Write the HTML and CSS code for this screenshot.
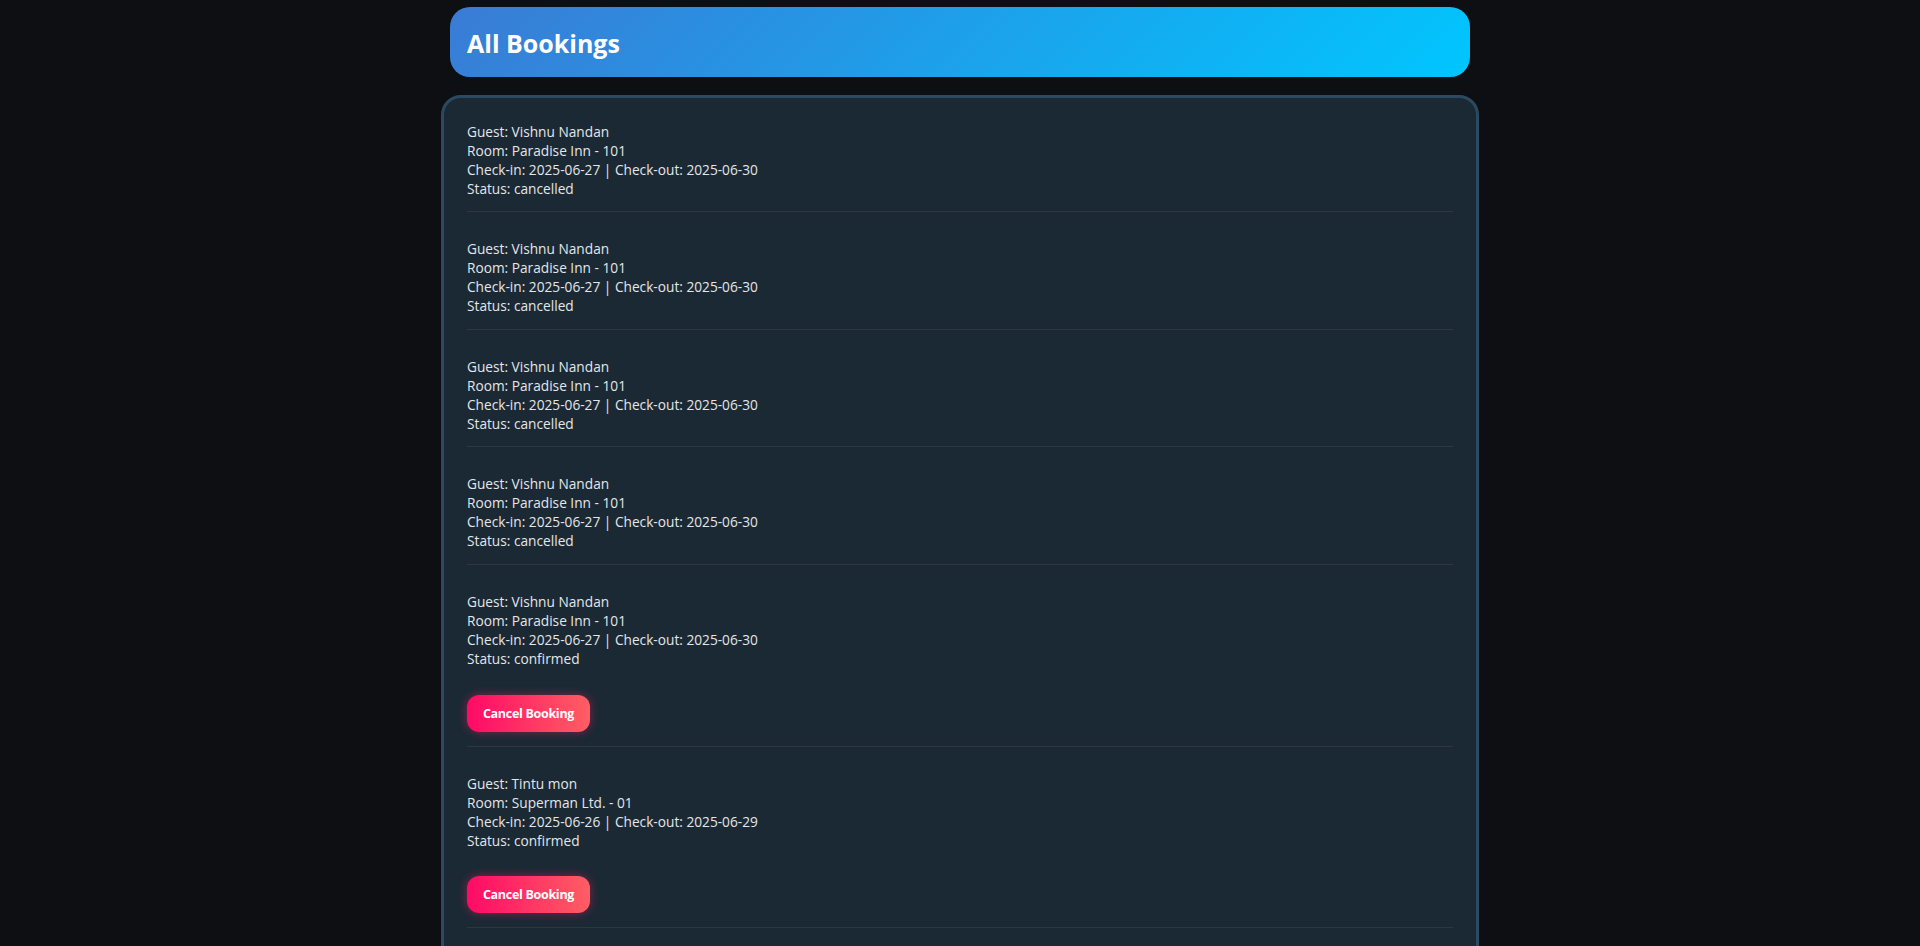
FILE: index.html
```html
<!DOCTYPE html>
<html lang="en">
<head>
<meta charset="utf-8">
<title>All Bookings</title>
<link rel="stylesheet" href="styles.css">
</head>
<body>
<div class="page">
  <header class="header">
    <h1 class="title">All Bookings</h1>
  </header>
  <section class="card">
    <div class="booking">
      <div class="line">Guest: Vishnu Nandan</div>
      <div class="line">Room: Paradise Inn - 101</div>
      <div class="line">Check-in: 2025-06-27 | Check-out: 2025-06-30</div>
      <div class="line">Status: cancelled</div>
    </div>
    <div class="booking">
      <div class="line">Guest: Vishnu Nandan</div>
      <div class="line">Room: Paradise Inn - 101</div>
      <div class="line">Check-in: 2025-06-27 | Check-out: 2025-06-30</div>
      <div class="line">Status: cancelled</div>
    </div>
    <div class="booking">
      <div class="line">Guest: Vishnu Nandan</div>
      <div class="line">Room: Paradise Inn - 101</div>
      <div class="line">Check-in: 2025-06-27 | Check-out: 2025-06-30</div>
      <div class="line">Status: cancelled</div>
    </div>
    <div class="booking">
      <div class="line">Guest: Vishnu Nandan</div>
      <div class="line">Room: Paradise Inn - 101</div>
      <div class="line">Check-in: 2025-06-27 | Check-out: 2025-06-30</div>
      <div class="line">Status: cancelled</div>
    </div>
    <div class="booking">
      <div class="line">Guest: Vishnu Nandan</div>
      <div class="line">Room: Paradise Inn - 101</div>
      <div class="line">Check-in: 2025-06-27 | Check-out: 2025-06-30</div>
      <div class="line">Status: confirmed</div>
      <button class="cancel-btn" type="button">Cancel Booking</button>
    </div>
    <div class="booking">
      <div class="line">Guest: Tintu mon</div>
      <div class="line">Room: Superman Ltd. - 01</div>
      <div class="line">Check-in: 2025-06-26 | Check-out: 2025-06-29</div>
      <div class="line">Status: confirmed</div>
      <button class="cancel-btn" type="button">Cancel Booking</button>
    </div>
    <div class="booking">
      <div class="line">Guest: Tintu mon</div>
      <div class="line">Room: Superman Ltd. - 01</div>
      <div class="line">Check-in: 2025-06-26 | Check-out: 2025-06-29</div>
      <div class="line">Status: cancelled</div>
    </div>
  </section>
</div>
</body>
</html>
```
FILE: styles.css
```css
html, body {
  margin: 0;
  padding: 0;
}

body {
  background: #0d0f12;
  color: #e4e6e8;
  font-family: "Open Sans", "Noto Sans", "DejaVu Sans", sans-serif;
}

.page {
  width: 1038px;
  margin: 0 auto;
  padding-top: 7px;
}

.header {
  margin: 0 9px;
  height: 70px;
  box-sizing: border-box;
  padding: 0 17px;
  border-radius: 20px;
  background: linear-gradient(135deg, #3a7bd5 0%, #00c6ff 100%);
  display: flex;
  align-items: center;
}

.title {
  margin: 2px 0 0;
  font-size: 25px;
  font-weight: 700;
  color: #ffffff;
}

.card {
  margin-top: 18px;
  border: 3px solid #2b4a61;
  border-radius: 20px;
  background: #1b2935;
  padding: 0 23px;
}

.booking {
  padding: 27px 0 13.6px;
  border-bottom: 1px solid #30373c;
}

.booking:first-child {
  padding-top: 23.7px;
}

.line {
  font-size: 13.7px;
  line-height: 19px;
}

.cancel-btn {
  display: block;
  margin-top: 26.5px;
  width: 123px;
  height: 37.4px;
  border: none;
  border-radius: 12px;
  background: linear-gradient(90deg, #ff0a66 0%, #ff5e63 100%);
  box-shadow: 0 0 10px rgba(255, 30, 100, 0.45);
  color: #ffffff;
  font-family: "Open Sans", "Noto Sans", sans-serif;
  font-size: 12.5px;
  font-weight: 700;
  letter-spacing: -0.3px;
  padding: 0;
  cursor: pointer;
}
```
